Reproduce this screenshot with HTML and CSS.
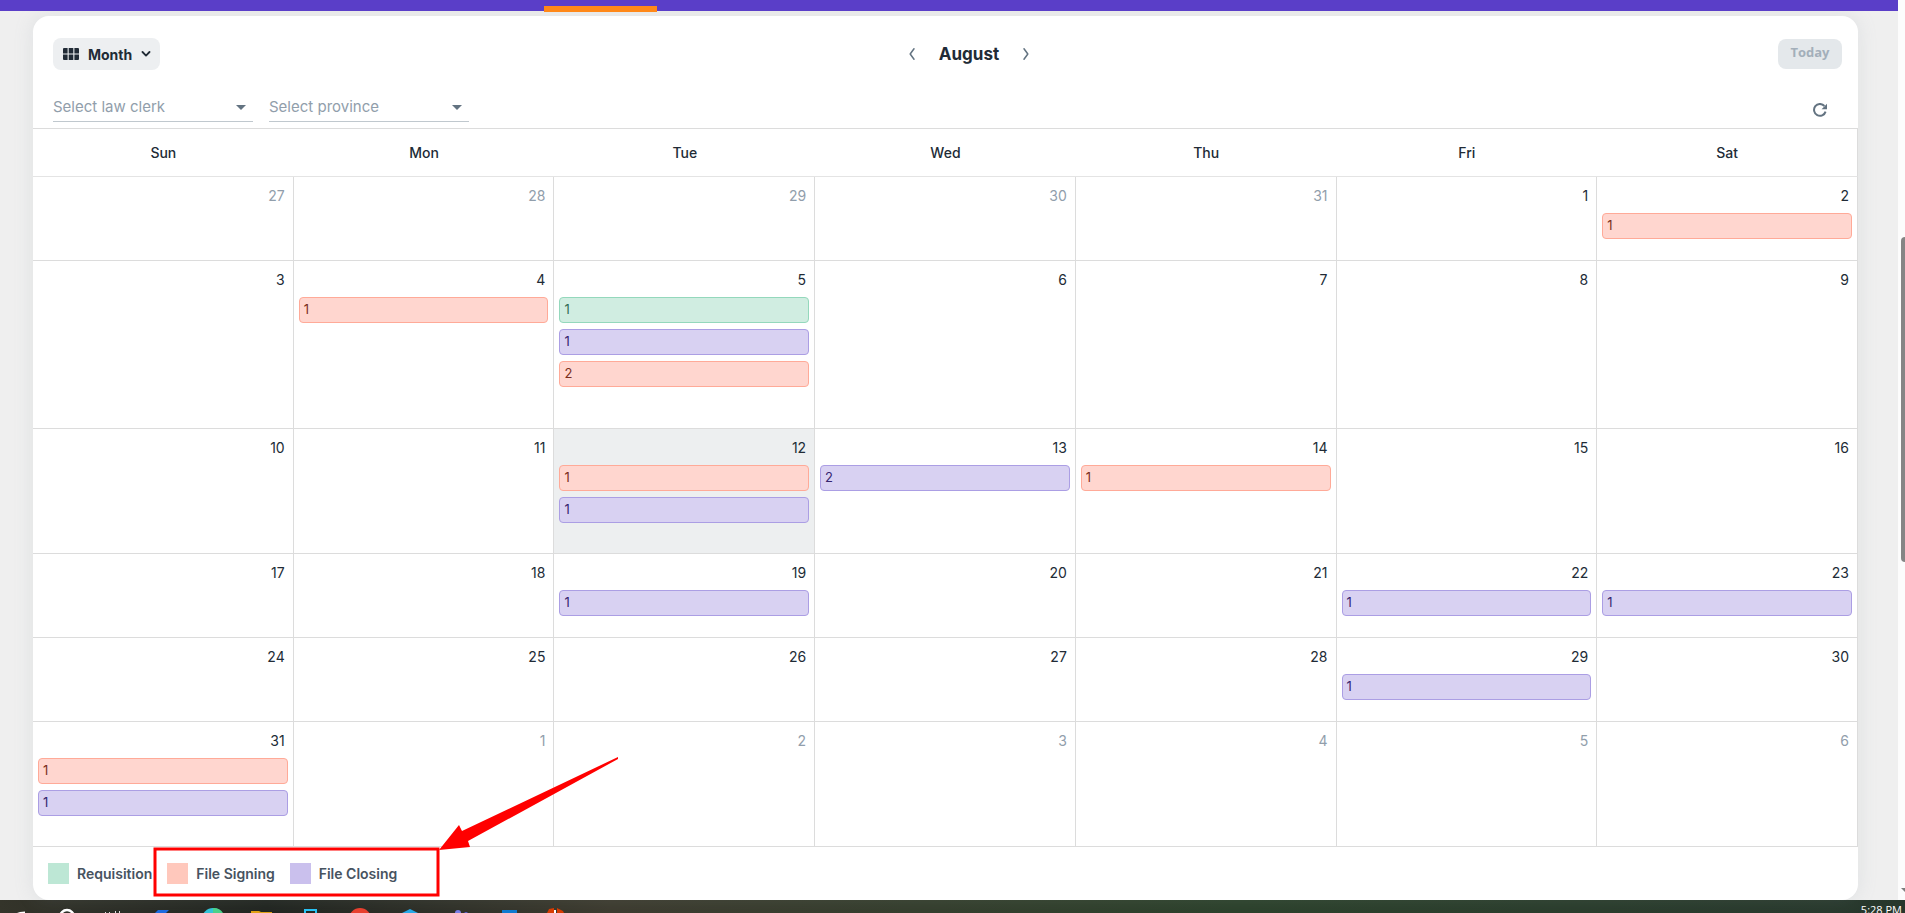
FILE: index.html
```
<!DOCTYPE html>
<html lang="en">
<head>
    <meta charset="UTF-8">
    <meta name="viewport" content="width=device-width, initial-scale=1.0">
    <title>Calendar</title>
    <link rel="stylesheet" href="styles.css">
</head>
<body>
    <div class="window">
        <div class="page">
            <header class="navbar"><span class="nav-active"></span></header>
            <main class="card">
                <div class="toolbar">
                    <button class="btn btn-view">
                        <svg width="16" height="12" viewBox="0 0 16 12"><path fill="currentColor" d="M0 1a1 1 0 0 1 1-1h3.600v5.400H0zM5.700 0h4.600v5.400H5.700zM11.400 0H15a1 1 0 0 1 1 1v4.400h-4.600zM0 6.600h4.600V12H1a1 1 0 0 1-1-1zM5.700 6.600h4.600V12H5.700zM11.400 6.600H16V11a1 1 0 0 1-1 1h-3.600z"/></svg>
                        Month
                        <svg width="10" height="6" viewBox="0 0 10 6"><path fill="none" stroke="currentColor" stroke-width="1.800" stroke-linecap="round" stroke-linejoin="round" d="M1.500 1 5 4.600 8.500 1"/></svg>
                    </button>
                    <div class="month-nav">
                        <button class="btn-arrow" aria-label="Previous month"><svg width="6" height="12" viewBox="0 0 6 12"><path d="M5 .8 1.200 6 5 11.200"/></svg></button>
                        <h1>August</h1>
                        <button class="btn-arrow" aria-label="Next month"><svg width="6" height="12" viewBox="0 0 6 12"><path d="M1 .8 4.800 6 1 11.200"/></svg></button>
                    </div>
                    <button class="btn btn-today" disabled>Today</button>
                </div>
                <div class="filters">
                    <div class="filter">
                        <select aria-label="Law clerk"><option>Select law clerk</option></select>
                        <svg class="caret" width="10" height="5" viewBox="0 0 10 5"><path fill="currentColor" d="M0 0h10L5 5z"/></svg>
                    </div>
                    <div class="filter">
                        <select aria-label="Province"><option>Select province</option></select>
                        <svg class="caret" width="10" height="5" viewBox="0 0 10 5"><path fill="currentColor" d="M0 0h10L5 5z"/></svg>
                    </div>
                    <button class="btn-refresh" aria-label="Refresh">
                        <svg width="14" height="14" viewBox="0 0 14 14"><path fill="none" stroke="currentColor" stroke-width="2" d="M12.600 8.600A5.900 5.900 0 1 1 11.400 3"/><path fill="currentColor" d="M14 .8v5.400H8.600z"/></svg>
                    </button>
                </div>

                <table class="calendar">
                    <thead>
                        <tr><th>Sun</th><th>Mon</th><th>Tue</th><th>Wed</th><th>Thu</th><th>Fri</th><th>Sat</th></tr>
                    </thead>
                    <tbody>
                        <tr class="week">
                            <td class="off"><span class="day">27</span></td>
                            <td class="off"><span class="day">28</span></td>
                            <td class="off"><span class="day">29</span></td>
                            <td class="off"><span class="day">30</span></td>
                            <td class="off"><span class="day">31</span></td>
                            <td><span class="day">1</span></td>
                            <td><span class="day">2</span><button class="event signing">1</button></td>
                        </tr>
                        <tr class="week week-lg">
                            <td><span class="day">3</span></td>
                            <td><span class="day">4</span><button class="event signing">1</button></td>
                            <td><span class="day">5</span><button class="event requisition">1</button><button class="event closing">1</button><button class="event signing">2</button></td>
                            <td><span class="day">6</span></td>
                            <td><span class="day">7</span></td>
                            <td><span class="day">8</span></td>
                            <td><span class="day">9</span></td>
                        </tr>
                        <tr class="week week-md">
                            <td><span class="day">10</span></td>
                            <td><span class="day">11</span></td>
                            <td class="today"><span class="day">12</span><button class="event signing">1</button><button class="event closing">1</button></td>
                            <td><span class="day">13</span><button class="event closing">2</button></td>
                            <td><span class="day">14</span><button class="event signing">1</button></td>
                            <td><span class="day">15</span></td>
                            <td><span class="day">16</span></td>
                        </tr>
                        <tr class="week">
                            <td><span class="day">17</span></td>
                            <td><span class="day">18</span></td>
                            <td><span class="day">19</span><button class="event closing">1</button></td>
                            <td><span class="day">20</span></td>
                            <td><span class="day">21</span></td>
                            <td><span class="day">22</span><button class="event closing">1</button></td>
                            <td><span class="day">23</span><button class="event closing">1</button></td>
                        </tr>
                        <tr class="week">
                            <td><span class="day">24</span></td>
                            <td><span class="day">25</span></td>
                            <td><span class="day">26</span></td>
                            <td><span class="day">27</span></td>
                            <td><span class="day">28</span></td>
                            <td><span class="day">29</span><button class="event closing">1</button></td>
                            <td><span class="day">30</span></td>
                        </tr>
                        <tr class="week week-md">
                            <td><span class="day">31</span><button class="event signing">1</button><button class="event closing">1</button></td>
                            <td class="off"><span class="day">1</span></td>
                            <td class="off"><span class="day">2</span></td>
                            <td class="off"><span class="day">3</span></td>
                            <td class="off"><span class="day">4</span></td>
                            <td class="off"><span class="day">5</span></td>
                            <td class="off"><span class="day">6</span></td>
                        </tr>
                    </tbody>
                </table>

                <div class="legend">
                    <div class="legend-item"><span class="swatch requisition"></span>Requisition</div>
                    <div class="legend-item"><span class="swatch signing"></span>File Signing</div>
                    <div class="legend-item"><span class="swatch closing"></span>File Closing</div>
                    <!-- red callout over the legend -->
                    <svg class="callout" width="470" height="142" viewBox="0 0 470 142">
                        <rect x="2" y="93" width="283" height="46" fill="none" stroke="#ff0000" stroke-width="3"/>
                        <path fill="#ff0000" d="M286 94 306 69 309 75 465 1 465 3 315 85 317 91z"/>
                    </svg>
                </div>
            </main>
        </div>
        <div class="scrollbar">
            <div class="thumb"></div>
            <svg class="scroll-arrow" width="4" height="4" viewBox="0 0 4 4"><path fill="#7d7d7d" d="M0 0h4v4z"/></svg>
        </div>
    </div>

    <footer class="taskbar">
        <svg width="600" height="13" viewBox="0 0 600 13">
            <path d="M17 13l3-1 5-.5V13z" fill="#fff"/>
            <circle cx="67" cy="17" r="7" fill="none" stroke="#fff" stroke-width="2.500"/>
            <path d="M105 12h1v1h-1zM109 12h1v1h-1zM115 11h1v2h-1zM119 11h1v2h-1z" fill="#ddd"/>
            <path d="M155 13l3-3h11l-3 3z" fill="#1d6be0"/>
            <circle cx="213" cy="19" r="11" fill="#33c4d8"/>
            <path d="M213 8a11 11 0 0 1 10 5h-10z" fill="#4bd18a"/>
            <path d="M251 13v-2h8l2 1h11v1z" fill="#e0a114"/>
            <path d="M305 13v-3h11v3" fill="none" stroke="#28c3f5" stroke-width="2"/>
            <circle cx="360" cy="19" r="11" fill="#e8402f"/>
            <path d="M402 13l8-4 8 4z" fill="#27a9e8"/>
            <circle cx="458" cy="13" r="3" fill="#7b7fe8"/>
            <circle cx="466" cy="14" r="2" fill="#5b5fd0"/>
            <path d="M502 10h15v3h-15z" fill="#0f7ad0"/>
            <path d="M547 13l2-4 5-1v5zM557 8l6 3 1 2h-7z" fill="#d83b01"/>
            <path d="M554 10h2v3h-2z" fill="#fff"/>
        </svg>
        <span class="clock">5:28 PM</span>
    </footer>
</body>
</html>
```
FILE: styles.css
```
* {
    box-sizing: border-box;
}
body {
    margin: 0;
    font-family: Inter, "Open Sans", sans-serif;
    font-size: 14px;
    color: #212b36;
    background-color: #efefef;
}
button, select {
    font-family: inherit;
    color: inherit;
    border: none;
    background: none;
    padding: 0;
}
svg {
    display: block;
}
.window {
    display: flex;
}
.page {
    flex: 1;
    min-width: 0;
}
.navbar {
    position: relative;
    height: 11px;
    background-color: #5a3ec8;
}
.nav-active {
    position: absolute;
    left: 544px;
    top: 6px;
    width: 113px;
    height: 6px;
    background-color: #ff8818;
}
.card {
    margin: 5px 40px 0 33px;
    padding-top: 16px;
    background-color: #fff;
    border-radius: 16px;
    box-shadow: 0 0 20px rgba(145, 158, 171, 0.16);
}

/* toolbar */
.toolbar {
    display: flex;
    align-items: center;
    justify-content: space-between;
    height: 44px;
    padding: 0 16px 0 20px;
}
.btn {
    border-radius: 8px;
    font-weight: 700;
}
.btn-view {
    display: flex;
    align-items: center;
    justify-content: space-between;
    width: 107px;
    height: 32px;
    padding: 0 9px 0 10px;
    font-size: 14px;
    background-color: #edeff1;
}
.btn-today {
    width: 64px;
    height: 30px;
    padding-bottom: 4px;
    font-family: "Open Sans", sans-serif;
    font-size: 13px;
    color: #a3afba;
    background-color: #e4e8eb;
}
.month-nav {
    display: flex;
    align-items: center;
    gap: 16px;
}
.month-nav h1 {
    margin: 0;
    font-size: 17px;
    line-height: 24px;
}
.btn-arrow {
    padding: 8px;
}
.btn-arrow path {
    fill: none;
    stroke: #637381;
    stroke-width: 1.5;
    stroke-linecap: round;
    stroke-linejoin: round;
}

/* filters */
.filters {
    display: flex;
    gap: 16px;
    height: 52px;
    padding: 16px 31px 0 20px;
}
.filter {
    position: relative;
    width: 200px;
    height: 30px;
}
.filter select {
    width: 100%;
    height: 30px;
    appearance: none;
    font-size: 15px;
    color: #919eab;
    border-bottom: 1px solid #c0c8ce;
}
.caret {
    position: absolute;
    right: 7px;
    top: 13px;
    color: #637381;
    pointer-events: none;
}
.btn-refresh {
    align-self: flex-start;
    margin-left: auto;
    padding-top: 11px;
    color: #637381;
}

/* month grid */
.calendar {
    width: 100%;
    table-layout: fixed;
    border-spacing: 0;
    border-top: 1px solid #dcdcdc;
}
.calendar th {
    height: 48px;
    padding: 0;
    font-size: 14px;
    font-weight: 500;
    border-bottom: 1px solid #e4e4e4;
}
.calendar th:last-child {
    border-right: 1px solid #dcdcdc;
}
.calendar td {
    padding: 9px 5px 0;
    vertical-align: top;
    border-right: 1px solid #dcdcdc;
    border-bottom: 1px solid #dcdcdc;
}
.week {
    height: 84px;
}
.week-md {
    height: 125px;
}
.week-lg {
    height: 168px;
}
.day {
    display: block;
    height: 27px;
    padding-right: 3px;
    line-height: 20px;
    text-align: right;
}
.off .day {
    color: #919eab;
}
.today {
    background-color: #edeff0;
}
.event {
    display: block;
    width: 100%;
    height: 26px;
    margin-bottom: 6px;
    padding: 0 4px 2px;
    font-size: 13px;
    text-align: left;
    border: 1px solid;
    border-radius: 4px;
}
.event.requisition {
    color: #2f6b53;
    background-color: #d0ede1;
    border-color: #94d8bc;
}
.event.signing {
    color: #7a2e20;
    background-color: #ffd6cf;
    border-color: #ffaa98;
}
.event.closing {
    color: #35256e;
    background-color: #d8d1f2;
    border-color: #ab9ee4;
}

/* legend */
.legend {
    position: relative;
    display: flex;
    gap: 15px;
    height: 53px;
    padding: 16px 15px 0;
    font-weight: 600;
    color: #47535f;
}
.legend-item {
    display: flex;
    align-items: center;
    gap: 8px;
    height: 21px;
}
.swatch {
    width: 21px;
    height: 21px;
}
.swatch.requisition {
    background-color: #bde7d5;
}
.swatch.signing {
    background-color: #ffc8bc;
}
.swatch.closing {
    background-color: #cac0ed;
}
.callout {
    position: absolute;
    left: 120px;
    top: -91px;
}

/* window chrome */
.scrollbar {
    position: relative;
    width: 7px;
    background-color: #fcfcfc;
}
.thumb {
    position: absolute;
    top: 237px;
    right: 0;
    width: 4px;
    height: 325px;
    background-color: #858585;
    border-radius: 4px 0 0 4px;
}
.scroll-arrow {
    position: absolute;
    right: 0;
    bottom: 8px;
}
.taskbar {
    display: flex;
    justify-content: space-between;
    height: 13px;
    overflow: hidden;
    background: linear-gradient(90deg, #34342a, #20241f 14%, #3c3a2e 32%, #2b402a 65%, #27372c);
}
.clock {
    padding: 3px 3px 0 0;
    font-family: "Open Sans", sans-serif;
    font-size: 11px;
    line-height: 14px;
    color: #fff;
}
```
